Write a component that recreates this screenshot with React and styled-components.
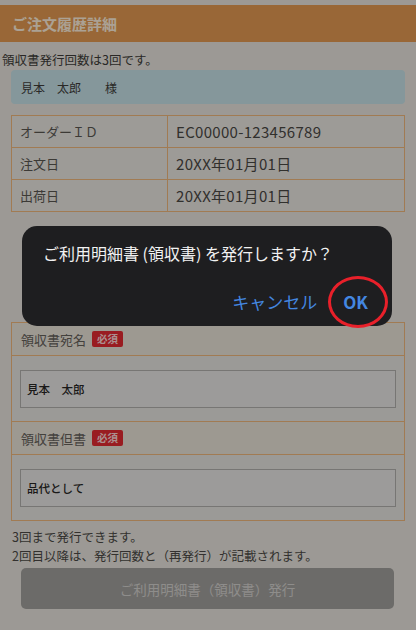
import React from "react";
import styled, { createGlobalStyle } from "styled-components";

const GlobalStyle = createGlobalStyle`
  html, body {
    margin: 0;
    padding: 0;
    background: #e9e5de;
  }
  body {
    font-family: "Noto Sans CJK JP", "Noto Sans", sans-serif;
    color: #4c4a46;
  }
`;

const Page = styled.div`
  position: relative;
  width: 416px;
  height: 630px;
  overflow: hidden;
  background: #e9e5de;
  padding-top: 5px;
  box-sizing: border-box;
`;

const Header = styled.div`
  height: 37px;
  background: #e59a52;
  display: flex;
  align-items: center;
  padding: 0 12px;
  color: #fff1dd;
  font-size: 15px;
  font-weight: 700;
`;

const CountText = styled.p`
  margin: 10px 0 0 2px;
  font-size: 12.5px;
  line-height: 15px;
  color: #3f3d3a;
`;

const NameBox = styled.div`
  margin: 3px 11px 0 11px;
  height: 34px;
  border-radius: 4px;
  background: #c6e1e7;
  display: flex;
  align-items: center;
  padding-left: 10px;
  font-size: 12px;
  color: #3f3d3a;
  white-space: pre;
`;

const Table = styled.div`
  margin: 11px 11px 0 11px;
  border: 1px solid #f0b87c;
  display: grid;
  grid-template-columns: 156px 1fr;
`;

const Cell = styled.div`
  height: 31px;
  display: flex;
  align-items: center;
  padding-left: 8px;
  font-size: ${(p) => (p.$head ? "13px" : "15px")};
  letter-spacing: ${(p) => (p.$head ? "0" : "0.3px")};
  color: ${(p) => (p.$head ? "#5a5751" : "#4a4844")};
  border-right: ${(p) => (p.$head ? "1px solid #f0b87c" : "none")};
  border-bottom: ${(p) => (p.$last ? "none" : "1px solid #f0b87c")};
  background: #eae7e2;
`;

const Form = styled.div`
  margin: 110px 11px 0 11px;
  border: 1px solid #f0b87c;
`;

const LabelRow = styled.div`
  height: 32px;
  display: flex;
  align-items: center;
  gap: 6px;
  padding-left: 9px;
  background: #ebe4d8;
  border-bottom: 1px solid #f0b87c;
  font-size: 13px;
  color: #66625c;
`;

const Badge = styled.span`
  background: #e52a32;
  color: #ffd6d6;
  font-size: 10.5px;
  font-weight: 700;
  line-height: 16px;
  padding: 0 5px;
  border-radius: 2px;
`;

const InputRow = styled.div`
  padding: 14px 8px 13px 8px;
  background: #e8e6e2;
  border-bottom: ${(p) => (p.$divided ? "1px solid #f0b87c" : "none")};
`;

const Input = styled.div`
  height: 36px;
  border: 1px solid #b2b0ad;
  background: #e9e8e6;
  display: flex;
  align-items: center;
  padding-left: 6px;
  font-size: 11.5px;
  font-weight: 500;
  color: #272624;
  white-space: pre;
`;

const Notes = styled.div`
  margin: 7px 0 0 12px;
  font-size: 12.5px;
  color: #4c4a46;
`;

const NoteLine = styled.p`
  margin: 0;
  line-height: 18.5px;
`;

const IssueButton = styled.div`
  margin: 3px 22px 0 21px;
  height: 41px;
  border-radius: 5px;
  background: #a2a09d;
  display: flex;
  align-items: center;
  justify-content: center;
  font-size: 13.5px;
  color: #d4d2cf;
`;

const Overlay = styled.div`
  position: absolute;
  inset: 0;
  background: rgba(0, 0, 0, 0.33);
`;

const Dialog = styled.div`
  position: absolute;
  left: 22px;
  top: 226px;
  width: 370px;
  height: 100px;
  box-sizing: border-box;
  background: #1e1e20;
  border-radius: 15px;
  padding: 16px 14px 0 21px;
  display: flex;
  flex-direction: column;
`;

const Message = styled.div`
  color: #f2f2f2;
  font-size: 16px;
  line-height: 22px;
`;

const Actions = styled.div`
  margin-top: auto;
  margin-bottom: 13px;
  display: flex;
  justify-content: flex-end;
  align-items: center;
  gap: 26px;
`;

const ActionButton = styled.div`
  position: relative;
  color: #4487e0;
  font-size: 17px;
  font-weight: ${(p) => (p.$bold ? 700 : 400)};
  line-height: 22px;
  padding-right: ${(p) => (p.$bold ? "10px" : "0")};
`;

const Mark = styled.span`
  position: absolute;
  left: -15px;
  top: -15px;
  width: 54px;
  height: 46px;
  border: 3px solid #e8202a;
  border-radius: 50%;
`;

const rows = [
  ["オーダーＩＤ", "EC00000-123456789"],
  ["注文日", "20XX年01月01日"],
  ["出荷日", "20XX年01月01日"],
];

export default function App() {
  return (
    <Page>
      <GlobalStyle />
      <Header>ご注文履歴詳細</Header>
      <CountText>領収書発行回数は3回です。</CountText>
      <NameBox>見本　太郎　　様</NameBox>
      <Table>
        {rows.map(([k, v], i) => (
          <React.Fragment key={k}>
            <Cell $head $last={i === rows.length - 1}>
              {k}
            </Cell>
            <Cell $last={i === rows.length - 1}>{v}</Cell>
          </React.Fragment>
        ))}
      </Table>
      <Form>
        <LabelRow>
          領収書宛名<Badge>必須</Badge>
        </LabelRow>
        <InputRow $divided>
          <Input>見本　太郎</Input>
        </InputRow>
        <LabelRow>
          領収書但書<Badge>必須</Badge>
        </LabelRow>
        <InputRow>
          <Input>品代として</Input>
        </InputRow>
      </Form>
      <Notes>
        <NoteLine>3回まで発行できます。</NoteLine>
        <NoteLine>2回目以降は、発行回数と（再発行）が記載されます。</NoteLine>
      </Notes>
      <IssueButton>ご利用明細書（領収書）発行</IssueButton>
      <Overlay />
      <Dialog>
        <Message>ご利用明細書 (領収書) を発行しますか？</Message>
        <Actions>
          <ActionButton>キャンセル</ActionButton>
          <ActionButton $bold>
            OK
            <Mark />
          </ActionButton>
        </Actions>
      </Dialog>
    </Page>
  );
}
